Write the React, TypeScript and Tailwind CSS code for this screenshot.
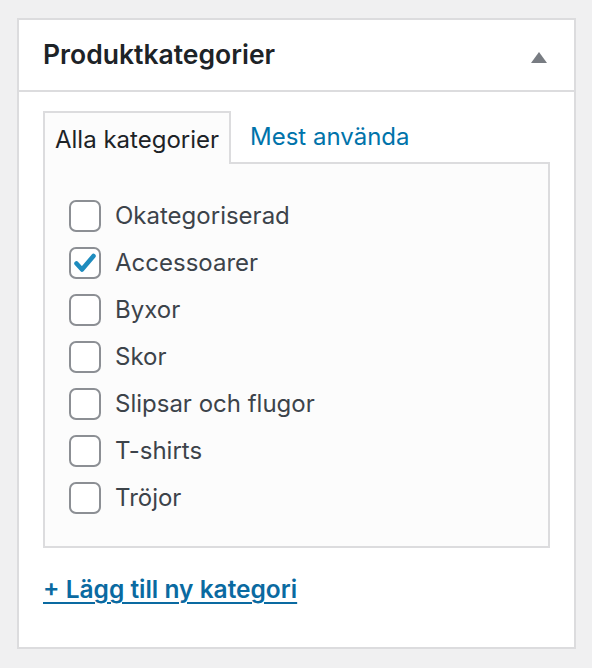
import React, { useState } from 'react';

const categories = [
  'Okategoriserad',
  'Accessoarer',
  'Byxor',
  'Skor',
  'Slipsar och flugor',
  'T-shirts',
  'Tröjor',
];

function App() {
  const [checked, setChecked] = useState<string[]>(['Accessoarer']);
  const [tab, setTab] = useState<'all' | 'pop'>('all');

  const toggle = (name: string) => {
    setChecked((prev) => (prev.includes(name) ? prev.filter((c) => c !== name) : [...prev, name]));
  };

  return (
    <div className="min-h-screen bg-[#f0f0f1] pt-[18px] pl-[17px] pr-[16px] font-['Inter',sans-serif]">
      <div className="w-[559px] bg-white border-2 border-[#dcdcde]">
        {/* Header */}
        <div className="h-[72px] flex items-center justify-between pl-[24px] pr-[26px] border-b-2 border-[#dcdcde]">
          <h2 className="text-[26.5px] font-semibold text-[#1d2327]">Produktkategorier</h2>
          <svg width="16" height="11" viewBox="0 0 16 11" className="mt-[4px] mr-[1px]">
            <polygon points="8,0 16,11 0,11" fill="#787c82" />
          </svg>
        </div>

        {/* Body */}
        <div className="pt-[17px] pl-[24px] pr-[24px] pb-[39px]">
          <div className="flex items-end h-[53px]">
            <button
              onClick={() => setTab('all')}
              className="h-[53px] px-[10px] pt-[2px] border-2 border-b-0 border-[#dcdcde] bg-[#fcfcfc] text-[24px] text-[#1d2327] relative top-[2px]"
            >
              Alla kategorier
            </button>
            <button
              onClick={() => setTab('pop')}
              className="h-[53px] px-[19px] pt-[2px] text-[24px] text-[#0073aa]"
            >
              Mest använda
            </button>
          </div>
          <div className="h-[386px] border-2 border-[#dcdcde] bg-[#fcfcfc] pt-[36px] pl-[24px]">
            <ul className="flex flex-col gap-[15px]">
              {categories.map((name) => {
                const on = checked.includes(name);
                return (
                  <li key={name}>
                    <label className="flex items-center gap-[14px] cursor-pointer">
                      <span
                        onClick={() => toggle(name)}
                        className="w-[32px] h-[32px] rounded-[7px] border-2 border-[#8c8f94] bg-white flex items-center justify-center shrink-0"
                      >
                        {on && (
                          <svg width="24" height="24" viewBox="0 0 24 24">
                            <path d="M3.5 12.5 L9 18.5 L20.5 5" fill="none" stroke="#1e8cbe" strokeWidth="4.5" strokeLinecap="round" strokeLinejoin="round" />
                          </svg>
                        )}
                      </span>
                      <span className="text-[24px] text-[#3c434a] leading-[32px]">{name}</span>
                    </label>
                  </li>
                );
              })}
            </ul>
          </div>
          <div className="mt-[23px]">
            <a href="#" className="text-[24.5px] font-semibold text-[#0a6aa1] underline underline-offset-[4px] decoration-[2px]">
              + Lägg till ny kategori
            </a>
          </div>
        </div>
      </div>
    </div>
  );
}

export default App;
